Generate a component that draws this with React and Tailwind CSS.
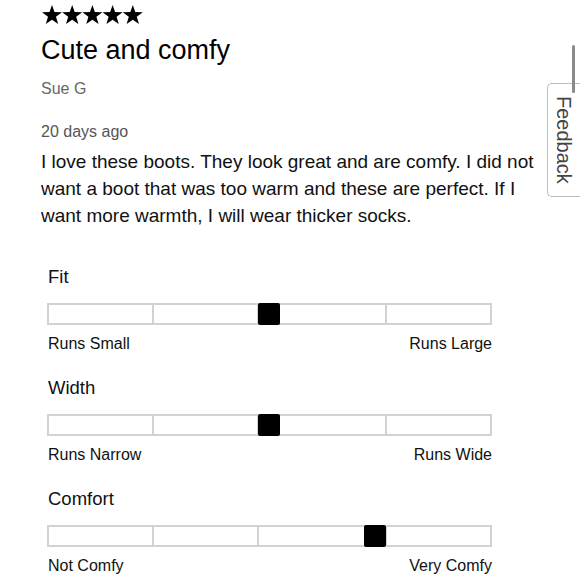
const STAR = "10,0 12.47,7.1 20,7.26 13.99,11.8 16.17,19 10,14.7 3.83,19 6.01,11.8 0,7.26 7.53,7.1";

const scales = [
  { label: "Fit", low: "Runs Small", high: "Runs Large", left: 211 },
  { label: "Width", low: "Runs Narrow", high: "Runs Wide", left: 211 },
  { label: "Comfort", low: "Not Comfy", high: "Very Comfy", left: 317 },
];

function Stars() {
  return (
    <svg width="102" height="20" viewBox="0 0 102 20" className="block">
      {[0, 1, 2, 3, 4].map((i) => (
        <polygon key={i} points={STAR} transform={`translate(${i * 20.2} 0)`} fill="#000" />
      ))}
    </svg>
  );
}

function ScaleBar({ left }) {
  return (
    <div className="relative mt-[15px] h-[22px] w-[445px]">
      <div className="flex h-full w-full border-2 border-[#d2d2d2]">
        <div className="w-[103px]" />
        <div className="w-[105px] border-l-2 border-[#d2d2d2]" />
        <div className="w-[128px] border-l-2 border-[#d2d2d2]" />
        <div className="flex-1 border-l-2 border-[#d2d2d2]" />
      </div>
      <div className="absolute top-0 h-[22px] w-[22px] rounded-[2px] bg-black" style={{ left }} />
    </div>
  );
}

export default function App() {
  return (
    <div className="relative h-[580px] w-[580px] overflow-hidden bg-white font-['Liberation_Sans',Arial,sans-serif] text-[#111]">
      <div className="pl-[41px] pt-[5px]">
        <div className="pl-[1px]">
          <Stars />
        </div>
        <h1 className="mt-[11px] text-[27px] leading-[28px] text-black">Cute and comfy</h1>
        <p className="mt-[15px] text-[16px] leading-[20px] text-[#666]">Sue G</p>
        <p className="mt-[23px] text-[16px] leading-[20px] text-[#555]">20 days ago</p>
        <p className="mt-[6px] text-[19px] leading-[27px] text-[#111]">
          I love these boots. They look great and are comfy. I did not
          <br />
          want a boot that was too warm and these are perfect. If I
          <br />
          want more warmth, I will wear thicker socks.
        </p>
      </div>

      <div className="mt-[37px] flex flex-col gap-[23px] pl-[47px]">
        {scales.map((s) => (
          <div key={s.label} className="w-[445px]">
            <div className="pl-[1px] text-[18.5px] leading-[22px] text-[#111]">{s.label}</div>
            <ScaleBar left={s.left} />
            <div className="mt-[9px] flex justify-between pl-[1px] text-[16px] leading-[20px] text-[#111]">
              <span>{s.low}</span>
              <span>{s.high}</span>
            </div>
          </div>
        ))}
      </div>

      <div className="absolute right-0 top-[83px] flex h-[114px] w-[33px] items-center justify-center rounded-l-[5px] border border-r-0 border-[#bdbdbd] bg-white">
        <span className="text-[20px] leading-none text-[#444] [writing-mode:vertical-rl]">Feedback</span>
      </div>
      <div className="absolute right-[5px] top-[45px] h-[48px] w-[3px] rounded-full bg-[#8a8a8a]" />
    </div>
  );
}
